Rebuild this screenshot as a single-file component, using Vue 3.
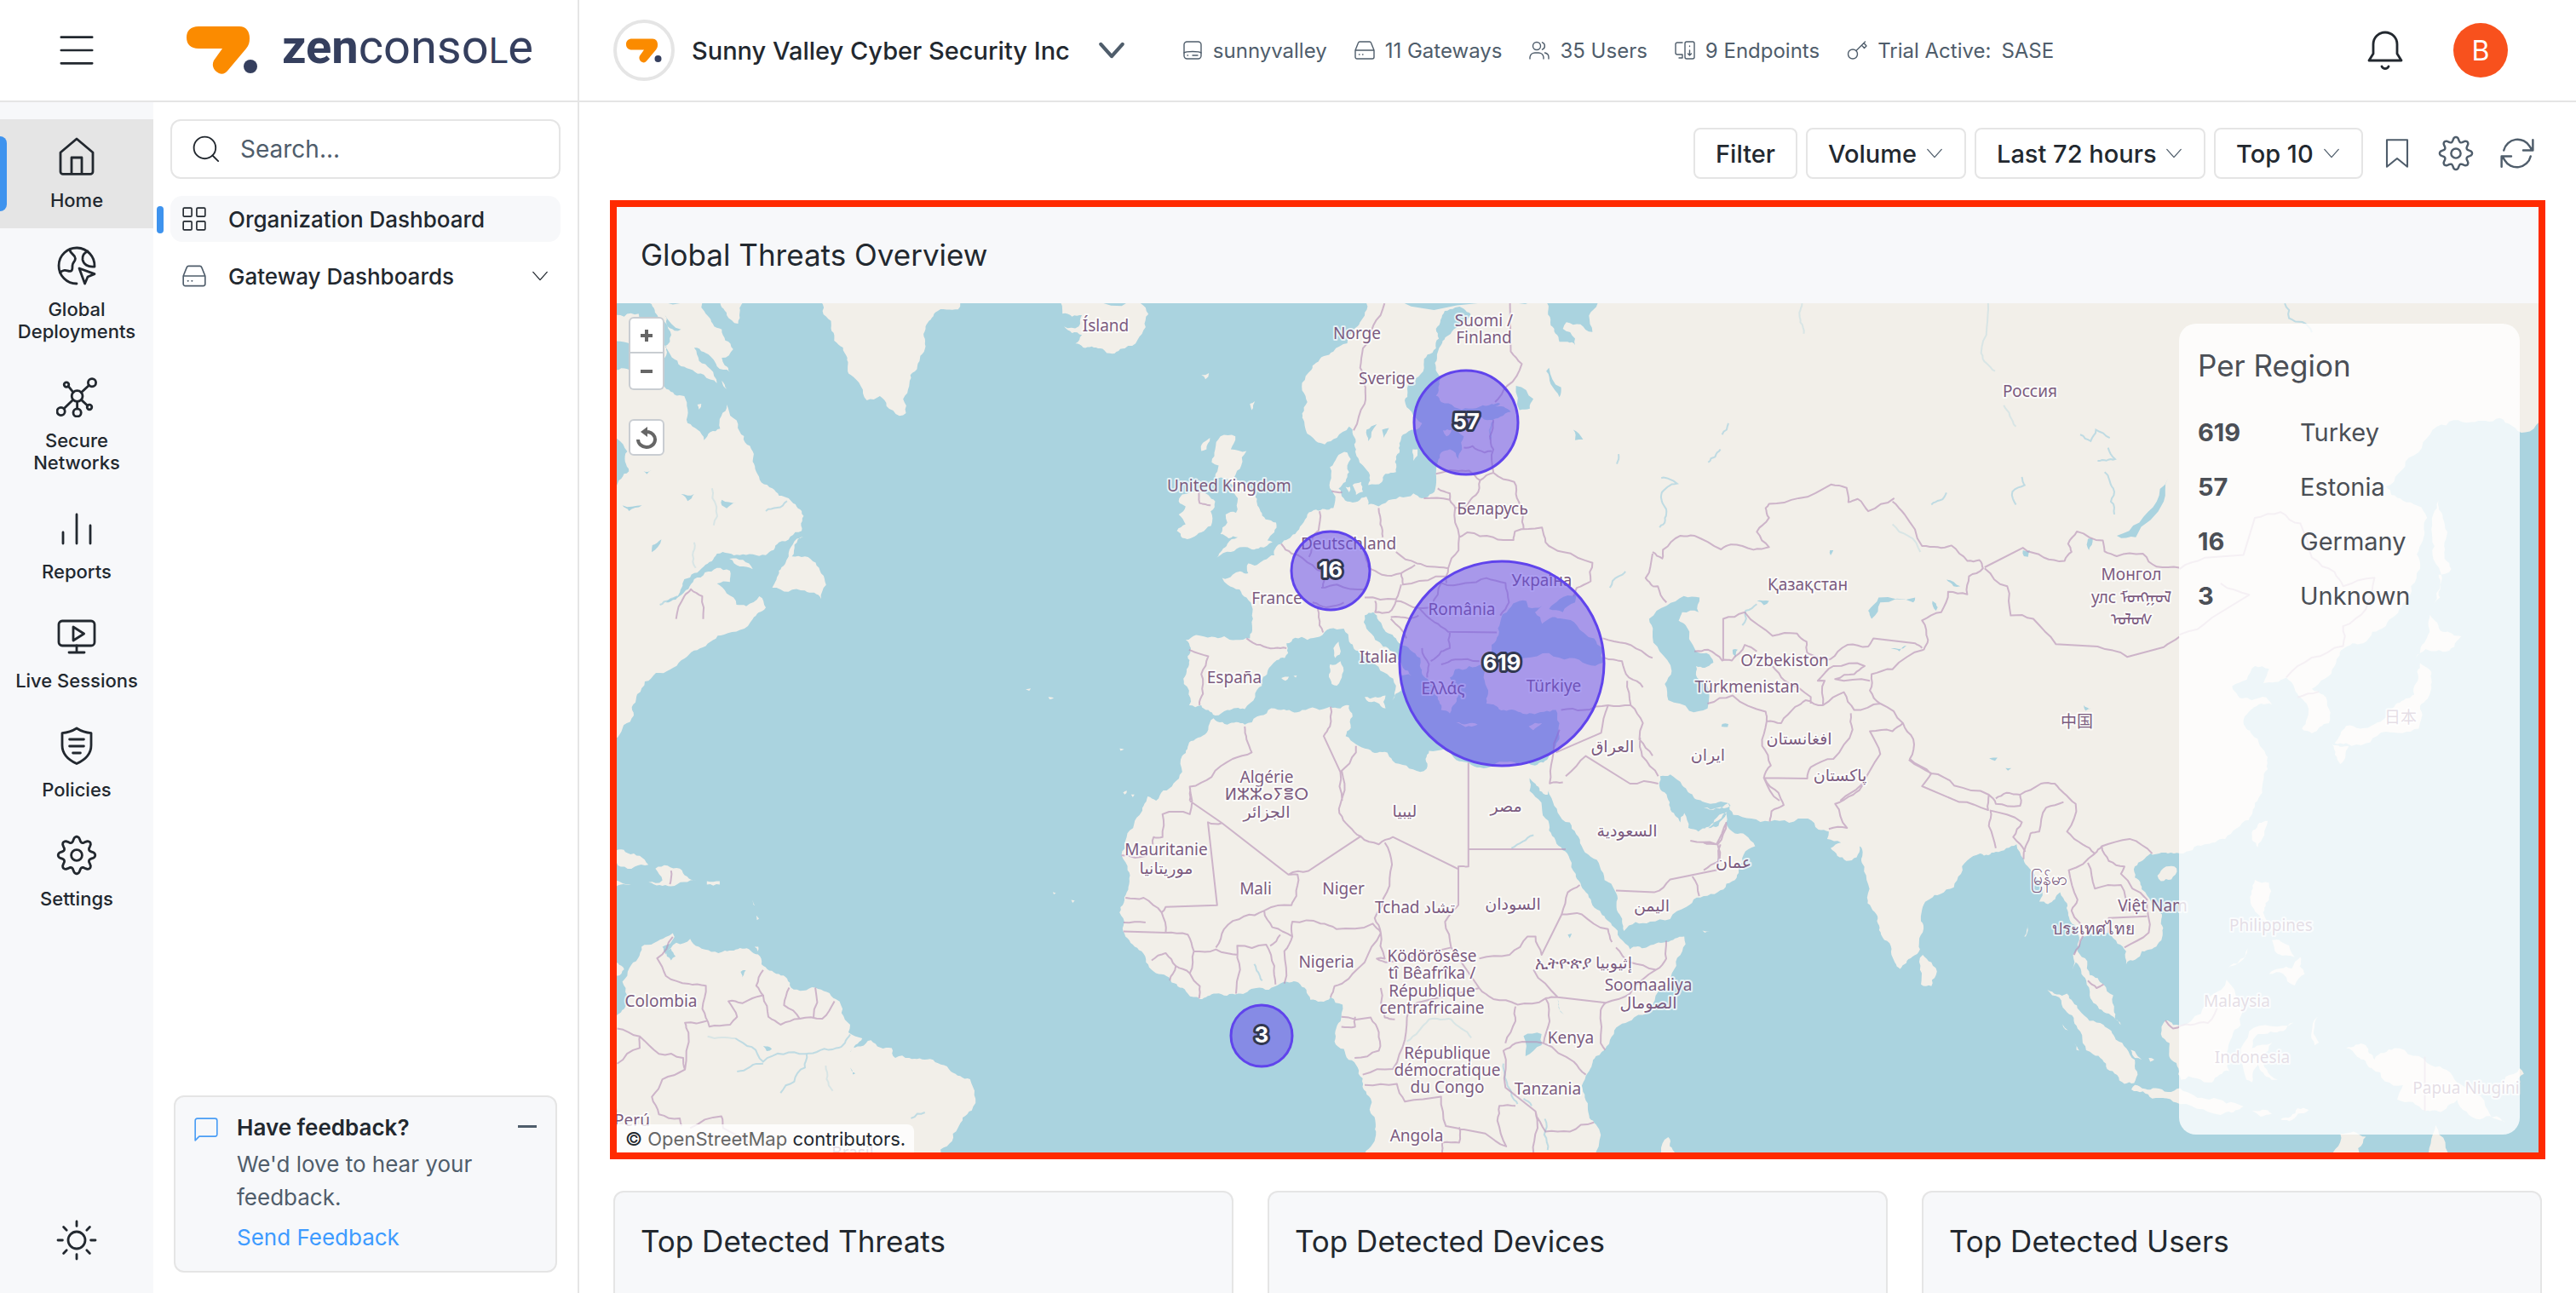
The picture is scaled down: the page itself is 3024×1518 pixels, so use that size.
<script setup>
import { ref } from 'vue'

const navItems = [
  { icon: 'home', label: 'Home', active: true },
  { icon: 'globe', label: 'Global Deployments' },
  { icon: 'network', label: 'Secure Networks' },
  { icon: 'bars', label: 'Reports' },
  { icon: 'live', label: 'Live Sessions' },
  { icon: 'shield', label: 'Policies' },
  { icon: 'gear', label: 'Settings' },
]
const facts = [
  { icon: 'disk', text: 'sunnyvalley' },
  { icon: 'drive', text: '11 Gateways' },
  { icon: 'users', text: '35 Users' },
  { icon: 'endpoints', text: '9 Endpoints' },
  { icon: 'key', text: 'Trial Active:', extra: 'SASE' },
]
const selects = [
  { label: 'Metric', value: 'Volume', width: 106 },
  { label: 'Time range', value: 'Last 72 hours', width: 189 },
  { label: 'Row count', value: 'Top 10', width: 93 },
]
const regions = [
  { count: 619, name: 'Turkey' },
  { count: 57, name: 'Estonia' },
  { count: 16, name: 'Germany' },
  { count: 3, name: 'Unknown' },
]
const cards = ['Top Detected Threats', 'Top Detected Devices', 'Top Detected Users']
const search = ref('')

/* Eight-toothed gear outline on a 24-unit grid */
const gearPath = (() => {
  const pts = []
  for (let i = 0; i < 96; i++) {
    const t = (i / 96) * Math.PI * 2
    const w = Math.cos(8 * t)
    const r = 9.4 + 1.5 * Math.sign(w) * Math.pow(Math.abs(w), 0.7)
    pts.push(`${(12 + r * Math.sin(t)).toFixed(2)} ${(12 - r * Math.cos(t)).toFixed(2)}`)
  }
  return 'M' + pts.join('L') + 'Z'
})()

/* Map sheets: origin and unit size of each local grid */
const sheets = {
  G: [0, 0, 1, 1],
  N: [700, 220, 0.38265, 0.33333],
  E: [1300, 340, 0.40816, 0.38265],
  A: [1940, 340, 0.40816, 0.38265],
  P: [2500, 340, 0.33418, 0.66964],
  S: [700, 800, 0.40816, 0.45791],
  F: [1300, 840, 0.47194, 0.4324],
  I: [2000, 840, 0.40816, 0.4324],
}
const place = (s, x, y) => {
  const [ox, oy, sx, sy] = sheets[s]
  return [ox + x * sx, oy + y * sy]
}
/* "E 1,2 3,4 F 5,6" -> points in map space */
const parse = (src) => {
  let s = 'G'
  const out = []
  for (const tok of src.trim().split(/\s+/)) {
    if (/^[A-Z]$/.test(tok)) s = tok
    else {
      const [x, y] = tok.split(',').map(Number)
      out.push(place(s, x, y))
    }
  }
  return out
}
const noise = (a, b) => {
  const v = Math.sin(a * 12.9898 + b * 78.233) * 43758.5453
  return v - Math.floor(v) - 0.5
}
/* Midpoint displacement gives coasts and borders a natural ragged edge */
const rough = (pts, closed, amount, depth, longest = 300) => {
  let list = pts
  for (let d = 0; d < depth; d++) {
    const next = []
    const n = list.length
    for (let i = 0; i < n; i++) {
      const p = list[i]
      next.push(p)
      if (!closed && i === n - 1) break
      const q = list[(i + 1) % n]
      const dx = q[0] - p[0]
      const dy = q[1] - p[1]
      const len = Math.hypot(dx, dy)
      if (len < 5 || len > longest) continue
      const k = noise(p[0] + q[0], p[1] + q[1]) * amount
      next.push([(p[0] + q[0]) / 2 - dy * k, (p[1] + q[1]) / 2 + dx * k])
    }
    list = next
  }
  return 'M' + list.map((p) => `${p[0].toFixed(1)} ${p[1].toFixed(1)}`).join('L') + (closed ? 'Z' : '')
}
const lines = (src) => src.trim().split('\n').map((l) => l.trim()).filter(Boolean)

const landPath = lines(`
E 745,42 740,80 710,120 690,165 650,190 600,225 570,265 560,310 575,345 560,380 570,430 600,465 625,475 660,455 695,420 705,430 715,490 735,540 755,570 750,600 790,590 800,565 830,560 840,500 850,445 885,430 905,410 875,375 855,340 865,290 910,230 945,180 945,120 970,65 1000,55 1045,75 1020,100 990,130 960,170 948,210 945,240 955,290 945,325 960,345 1040,365 1080,355 1130,350 1115,358 1160,375 1130,390 1100,400 1040,385 1010,395 1000,430 1025,450 1020,490 1010,520 985,490 960,500 950,530 945,565 945,600 935,625 905,640 880,625 840,635 800,655 780,665 750,660 745,635 720,650 690,650 680,640 665,610 685,590 695,560 690,540 700,520 690,500 660,515 640,545 640,590 650,625 650,670 600,675 575,690 560,720 540,750 520,765 500,780 485,790 480,815 450,830 430,845 405,840 405,870 360,875 330,885 345,905 380,920 400,945 418,980 415,1020 410,1070 370,1075 300,1065 255,1060 225,1075 240,1100 235,1150 220,1210 235,1230 235,1275 270,1275 290,1290 310,1307 345,1290 395,1287 425,1250 445,1215 440,1200 470,1155 510,1130 520,1115 515,1085 540,1068 575,1075 610,1065 640,1040 680,1040 695,1080 730,1120 770,1150 805,1180 830,1215 820,1260 845,1230 840,1190 875,1185 850,1160 820,1110 770,1075 745,1040 740,1000 765,990 775,1000 790,1030 830,1070 870,1105 900,1130 905,1180 925,1200 940,1240 960,1290 985,1300 1000,1270 1010,1240 985,1190 1000,1165 1040,1155 1080,1150 1085,1160 1085,1200 1095,1240 1090,1270 1140,1290 1170,1290 1220,1300 1290,1290 1300,1330 1300,1370 1290,1400 1270,1430 1230,1460 1180,1455 1100,1465 1030,1450 970,1410 925,1415 915,1440 918,1470 900,1480 860,1460 820,1445 805,1420 750,1410 715,1395 685,1370 700,1345 705,1310 695,1275 670,1285 640,1280 600,1285 560,1290 500,1290 430,1310 395,1335 345,1335 315,1325 305,1315 290,1350 240,1385 215,1430 215,1480 190,1515 140,1568 F 100,220 80,270 45,340 35,380 50,420 48,480 30,535 40,570 45,600 85,640 115,695 160,725 200,755 230,770 270,755 325,755 370,740 430,728 475,725 495,745 505,772 555,765 585,785 580,830 565,885 600,935 635,985 655,1040 655,1080 668,1130 640,1190 640,1230 1215,1230 1215,1110 1195,1070 1180,1005 1195,970 1215,925 1260,865 1310,820 1370,750 1415,680 1430,640 1435,600 1390,615 1340,630 1300,635 1275,605 1255,570 1225,530 1190,480 1165,430 1150,390 1115,340 1090,280 1050,205 1050,170 1075,205 1095,215 1100,200 1105,225 1150,290 1180,355 1225,410 1262,475 1270,535 1285,585 1350,560 1440,520 1500,485 I 0,487 40,480 95,440 100,415 148,355 120,325 90,320 65,290 65,262 30,290 0,310 F 1540,265 1520,300 1470,315 1445,305 1435,265 1425,290 1400,250 1375,200 1375,165 1400,160 1430,190 1460,225 1500,240 1550,245 I 0,250 70,238 85,270 190,288 300,280 330,310 360,315 355,335 395,345 365,360 410,395 440,385 448,355 455,400 470,495 500,545 510,595 540,650 565,688 600,655 622,635 620,605 632,570 630,520 680,485 740,430 795,375 840,370 900,350 920,390 955,440 975,470 965,505 990,512 1025,480 1045,510 1055,560 1080,610 1062,650 1060,690 1070,670 1100,720 1110,760 1150,805 1200,840 1180,800 1178,760 1150,730 1110,705 1075,640 1090,600 1120,585 1165,590 1190,620 1215,640 1215,675 1260,640 1310,615 1320,590 1318,540 1270,480 1240,440 1240,410 1285,375 1335,375 1370,375 1440,350 1500,335 P 419,930 440,900 470,860 485,820 430,780 400,755 430,735 500,728 480,715 430,720 370,705 360,695 440,660 490,665 470,690 550,680 580,700 600,715 625,730 605,770 640,778 700,760 700,735 680,710 640,700 720,660 750,630 820,620 900,590 960,550 1020,490 1030,440 1045,400 960,370 920,360 900,345 980,295 1080,240 1200,232 1300,225 1390,250 1500,230 1500,0 E 1410,20 1410,42 1385,80 1395,130 1320,100 1310,120 1345,150 1345,170 1300,160 1275,110 1265,42 1265,20 745,20
N 1425,390 1430,445 1490,450 1480,490 1435,490 1490,520 1470,550 1520,560 1568,585 E 0,195 50,180 110,115 118,75 95,42 95,20
E 325,450 368,450 355,490 400,495 385,540 365,575 400,600 425,630 440,680 455,705 485,715 480,745 460,770 475,775 440,790 390,790 355,805 315,822 345,780 375,760 325,750 345,715 340,690 370,685 375,640 350,620 365,600 345,580 310,575 320,540 300,530 310,490
E 205,650 250,620 290,630 310,650 297,680 298,725 270,745 215,762 200,740 225,720 205,690 225,665
E 275,470 295,455 285,490 270,495
E 705,600 730,590 735,620 715,630
E 685,605 698,605 695,622
E 878,490 892,490 880,525
E 270,262 292,256 282,275
E 410,350 424,342 415,370
E 990,430 965,432 975,450
E 640,1150 670,1140 675,1180 660,1215 645,1210
E 665,1080 668,1120 655,1130 650,1100
E 740,1250 800,1245 800,1285 745,1260
E 1003,1328 1065,1335 1030,1342
E 1212,1340 1250,1330 1225,1352
E 500,1192 522,1188 512,1200
E 535,1185 545,1184 542,1190
N 690,390 720,470 730,540 770,600 780,660 830,750 870,735 890,770 930,805 950,795 960,700 985,630 1010,560 1010,490 1040,440 1110,430 1130,390
N 150,390 180,440 230,520 210,560 260,630 330,660 370,690 350,640 300,565 330,580 370,630 410,650 385,600 420,570 385,500 340,450 320,390
N 380,390 400,450 435,480 440,440 465,390
N 40,460 130,445 160,500 215,560 210,600 130,560 40,530
N 385,680 400,710 390,700
N 310,765 322,762 315,782
N 40,645 110,655 130,700 215,710 270,735 280,830 330,890 380,850 400,765 440,860 480,930 490,1000 540,1060 590,1095 630,1140 630,1210 560,1250 520,1295 440,1295 370,1290 330,1335 270,1380 250,1440 200,1470 255,1440 300,1380 370,1340 410,1350 410,1390 370,1395 400,1430 430,1470 460,1475 500,1440 520,1480 480,1520 G 850,745 825,760 800,775 770,790 757,800 748,815 744,840 725,866 700,870 N 20,1060 63,1060 100,1000 95,930 63,885 20,860
N 635,1230 600,1300 640,1300 690,1360 705,1400 690,1450 640,1420 540,1410 560,1350 590,1300
N 408,1308 450,1312 480,1345 440,1335
S 40,425 90,440 150,470 70,475
S 40,510 100,520 40,525
S 170,480 240,480 290,510 215,525 150,515 190,510
S 318,512 355,512 355,521 318,521
S 40,1240 40,880 60,855 80,840 75,770 95,735 120,710 130,680 200,655 220,645 225,655 190,680 200,700 230,670 270,660 295,680 370,690 420,685 465,700 475,725 525,750 560,785 630,785 690,815 705,850 730,880 725,900 765,915 730,950 790,920 850,940 860,965 900,965 960,968 1020,1000 1075,1020 1087,1060 1080,1100 1040,1145 990,1200 985,1240
S 40,710 80,738 60,755
S 450,560 456,575 452,572
S 460,600 468,608 462,612
S 455,680 466,680 464,692
S 1235,20 1250,18 1245,24
S 1300,40 1316,42 1304,46
S 1505,172 1518,174 1508,178
S 1515,285 1526,280 1520,290
S 1538,290 1548,290 1543,297
S 1313,540 1322,543 1316,546
S 1366,560 1376,562 1370,568
F 1385,1230 1395,1145 1412,1190 1412,1230
F 1480,584 1498,586 1486,590
I 630,650 655,670 668,705 655,735 625,730 622,690
I 988,745 1045,755 1080,800 1150,840 1185,880 1240,935 1238,998 1210,1000 1160,960 1120,920 1075,850 1040,800
I 1032,838 1048,855 1040,852
I 1066,890 1080,910 1072,908
I 932,565 926,600 922,600
I 1228,908 1240,912 1260,935 1240,930
I 1280,930 1296,934 1284,940
I 1230,1015 1240,1003 1300,1012 P 177,1400 280,1420 400,1432 340,1442 I 1370,1055 1290,1040
P 430,1440 500,1445 460,1450
P 530,1455 590,1435 630,1438 560,1458
P 175,1290 250,1270 340,1210 390,1290 360,1310 350,1370 290,1390 180,1385 I 1345,935 1340,890 1315,865 1328,828 1350,840
P 420,1300 575,1285 540,1300 450,1305 430,1330 500,1320 460,1345 520,1385 480,1380 450,1350 430,1390 410,1385
P 640,1300 660,1275 665,1320 650,1325
P 440,1035 490,1040 490,1070 475,1100 510,1120 440,1090 425,1075
P 490,1200 530,1190 570,1190 600,1170 615,1200 580,1220 540,1200
P 500,1140 560,1150 580,1170 520,1165
P 345,1190 415,1155 380,1180
P 430,965 455,935 485,932 450,978
I 1305,435 1330,410 1360,415 1345,445 1315,450
P 1055,570 1100,600 1165,608 1100,635 1040,630 1005,645 1045,610
P 1020,655 1060,670 1060,700 1020,730 1015,770 900,775 780,800 760,795 720,795 760,765 860,762 900,750 940,725 1000,710 1010,670
P 710,797 770,800 740,832
P 1085,370 1100,400 1105,450 1130,490 1085,500 1090,540 1070,550 1075,480 1060,420
P 760,1330 830,1325 860,1350 930,1330 1060,1360 1150,1390 1260,1440 1320,1460 1230,1455 1150,1420 1100,1440 1040,1440 940,1420 960,1395 850,1365 800,1345
P 1280,1400 1370,1365 1385,1375 1320,1405
P 690,1530 740,1480 830,1485 800,1530
P 1045,1530 1075,1465 1110,1530
`).map((l) => rough(parse(l), true, 0.34, 3)).join('')

const waterPath = lines(`
E 1185,955 1205,955 1210,975 1250,970 1230,990 1250,1025 1280,1005 1310,1010 1350,1030 1400,1070 1425,1100 1425,1145 1380,1150 1330,1130 1270,1115 1200,1130 1150,1120 1115,1130 1105,1090 1125,1060 1130,1020 1155,980
E 1270,980 1300,950 1350,935 1345,960 1310,990
A 90,940 135,945 132,990 85,990 75,1015 95,1030 125,1110 155,1115 175,1145 150,1160 125,1155 128,1190 155,1210 158,1285 105,1292 45,1260 35,1210 55,1170 20,1110 0,1050 -10,1010 40,970
E 1175,295 1225,335 1215,365 1185,370
E 1270,240 1305,300 1300,330 1275,290 1262,250
E 1340,430 1368,460 1345,462
E 745,430 775,413 750,465
E 790,430 810,425 795,455
F 1035,870 1080,865 1080,895 1040,925
A 1482,580 1470,650 1390,760 1335,755 1400,715 1450,650
A 620,985 650,945 755,945 750,960 655,960 630,1010
A 805,955 820,975 815,985
A 685,1100 730,1092 710,1110
A 845,890 885,910 865,910
A 1065,800 1085,800 1080,820 1068,818
A 1252,765 1266,765 1255,800
A 230,1105 245,1105 238,1130
A 1240,1275 1262,1285 1245,1292
A 200,1333 218,1333 216,1342 198,1341
A 300,955 335,955 320,968
A 510,800 520,800 512,815
A 968,1438 992,1436 985,1446
A 1015,1468 1032,1468 1022,1476
S 200,690 215,685 228,705 215,715 203,705
S 415,745 430,740 420,765
S 730,990 745,1005 738,1008
S 480,935 505,942 490,948
N 385,1100 430,1110 400,1130 385,1120
N 260,1080 300,1080 280,1105
N 200,1240 170,1285 172,1260
N 80,1120 140,1120 100,1140
N 145,1000 170,995 155,1010
N 210,450 260,500 240,505 215,480
F 1145,595 1155,592 1150,605
F 1120,770 1135,812 1125,800
`).map((l) => rough(parse(l), true, 0.3, 2)).join('')

const riverPath = lines(`
F 985,945 995,1005 1020,1055
F 1088,1095 1095,1180
F 1005,360 1060,325
F 365,675 385,720
F 1035,1040 1055,1060
E 1110,405 1100,460
E 1470,505 1465,535
E 1445,915 1470,880 1490,865
A 20,730 40,680 25,630 70,595 25,578
A 160,530 195,490
A 200,445 218,410
A 802,660 845,623
A 1045,660 1035,620 1070,600 1062,575
A 1230,445 1260,465 1275,430 1315,455
A 1310,485 1330,520 1280,525
A 1300,560 1325,610 1328,690
A 258,1030 268,985 300,965
P 545,24 560,50 640,75
S 400,915 480,975 600,955 690,940 730,905
S 405,1000 480,980
S 530,1055 600,990 605,955
S 905,1120 945,1105
N 520,1140 585,1105
N 195,1470 250,1440
`).map((l) => rough(parse(l), false, 0.3, 3)).join('')

/* Streams that are barely visible at this zoom level */
const streamPath = lines(`
A 965,42 945,195 985,250
A 430,42 425,100 435,135
A 1010,355 1045,420
A 690,720 770,805
S 320,910 400,915
S 660,985 680,1050
N 355,1060 360,1190
N 300,1250 305,1340
F 745,885 800,825 855,825 905,875
`).map((l) => rough(parse(l), false, 0.25, 3)).join('')

const borderPath = lines(`
E 797,42 765,110 735,180 727,240 742,300 740,350 708,432
E 1158,42 1160,190 1192,228 1150,295 1115,345
E 1110,400 1100,450 1110,490 1110,560
E 1025,485 1050,480 1085,500 1105,495
E 945,565 1000,555 1040,555 1072,585 1110,562 1170,590 1178,640 1195,690 1197,735
E 950,610 985,625 985,645 910,640
E 1072,585 1060,630 1030,665 1000,670 1000,715 1010,800 980,855
E 985,645 1000,670
E 1010,760 1035,745 1110,760 1168,768 1172,742 1250,730 1260,775 1310,805 1395,838 1390,895 1350,915 1340,940
E 780,670 785,720 792,760
E 830,805 890,840 930,850 980,855
E 740,810 750,850 790,875 845,870 885,845
E 845,870 850,905 945,880 975,880
E 610,680 607,740 590,760 580,820
E 500,780 530,810 590,845 625,870 620,915
E 615,915 660,905 740,920 755,890
E 590,960 630,975 680,960
E 605,980 610,1030 620,1052
E 740,945 830,950 845,905
E 770,955 770,990 810,990 830,955 880,975 935,970 960,900 1030,900 1090,885 1145,900 1155,960 1130,1000
E 980,855 975,900
E 815,1005 870,1010 895,1000
E 815,1010 860,1070
E 895,975 940,1020 980,1050 1120,1052
E 985,1050 985,1100 960,1110 930,1140
E 905,1100 925,1150 920,1190
E 960,1150 1000,1135 1070,1140
E 400,1070 440,1090 480,1100 515,1100
E 235,1105 290,1125 270,1180 275,1240 265,1275
E 265,615 265,655 297,662
E 645,618 675,622
E 1425,1070 1490,1085 1550,1120 1568,1130
E 1430,1130 1480,1140 1500,1190 1540,1220
E 1305,1290 1370,1290 1440,1275 1505,1275 1495,1200
E 1440,1275 1420,1360 1290,1420
E 1505,1275 1540,1330 1530,1380 1568,1430
E 1568,810 1548,885 1568,910
E 1300,1350 1280,1440 1272,1515 1310,1512
E 642,1280 640,1340 622,1370 670,1480
E 715,1400 715,1420 670,1480 675,1568
E 395,1340 400,1380 415,1420 360,1440 300,1495 237,1525 237,1568
F 205,195 205,268 137,268 137,330 115,330 113,350
F 205,232 285,292 450,432 500,422 630,328 675,350 710,330 873,417
F 583,150 585,220 577,265 600,300 630,328
F 285,292 250,290 273,515 145,520 135,535
F 35,380 100,380
F 45,495 90,495 135,535 145,590
F 40,562 95,562
F 40,586 145,590
F 450,432 473,432 470,490 458,515 390,530 340,545 290,580 270,630
F 690,345 708,405 695,480 665,550 680,590
F 898,128 898,410 873,410 873,515 840,560 855,630
F 898,363 1140,363
F 460,600 460,560 530,565 570,580 660,565 680,590 640,670 600,715 565,735 555,765
F 390,530 410,575 460,600 440,640 440,728
F 320,755 330,690 323,625 395,622 415,680 418,730
F 405,625 430,595
F 215,640 270,635 325,650
F 145,590 200,595 215,640 205,700 230,735 228,768
F 110,665 145,645 170,680 155,720
F 170,680 205,700
F 680,590 690,660 670,660 700,670 855,630
F 925,660 1000,650 1045,600 1065,600 1080,650 1130,540 1145,480 1175,460
F 1130,540 1180,540 1245,580 1255,615
F 1265,630 1300,670 1365,690 1300,755 1240,780 1120,765 1060,690
F 1390,612 1390,660 1365,690
F 1240,780 1227,800 1227,890 1238,908
F 855,630 925,740 960,770 1020,785 1090,768 1120,765
F 1090,768 1100,830 1085,890 1015,890 985,910 990,1010 1065,1075 1090,1130 1150,1130 1210,1105
F 1085,890 1160,940 1190,975
F 1015,790 1015,830 990,890
F 640,1003 720,1000 740,1048 830,1035 842,1115 940,1135 992,1170 970,1100 975,1060 1015,1060
F 833,1190 833,1160 875,1160 875,1118
F 1065,1075 1070,1120 1060,1190
F 680,740 690,820 715,825
F 925,740 770,780 750,800 740,880 710,960 635,975
F 582,818 655,820 675,860 675,910 615,930
F 582,845 616,845 616,818
F 1140,165 1190,110 1300,185 1370,185
F 1450,340 1515,350 1540,290
F 1265,475 1360,480 1400,445 1515,420 1525,350
F 1455,437 1472,490
F 1325,60 1330,110 1370,165
A 0,805 28,825 30,798 80,755 120,755 197,797 225,782 290,798 335,790 300,743 335,700 325,670 335,657 420,640 513,598 558,608 563,652 590,642 620,680 695,640
A 690,650 725,690 775,787 820,790 860,785 905,832 940,830 950,855 910,880 905,935 850,927 830,990 775,1015 792,1075 780,1105
A 775,1100 755,1085 635,1070 620,1095 560,1090 510,1135
A 955,852 1065,792 1125,822 1185,832 1205,805 1195,780 1220,742 1295,770 1300,803 1335,818 1410,810 1450,850 1515,853
A 955,855 1020,910 1030,1000 1095,1010 1160,1088 1280,1095 1365,1127 1470,1097 1515,1065
A 203,1138 203,1010 265,990 345,1062 415,1055 443,1080 445,1115 510,1135
A 120,1110 160,1105 200,1138 228,1138 265,1090 300,1110
A 780,1105 690,1165 630,1180 625,1230 655,1270 720,1330 750,1380 740,1440 800,1485
A 345,1155 380,1200 455,1250 455,1270
A 158,1270 230,1245 325,1295 328,1325 370,1330 410,1280 440,1260 490,1275 550,1235 580,1290 655,1270
A 328,1325 315,1400 340,1460 320,1498 365,1568
A 320,1498 445,1500 455,1465 520,1440 575,1350 570,1300
A 720,1330 690,1355 625,1355 655,1425 600,1520 540,1568
A 490,1275 495,1200 475,1200 520,1155 610,1155 580,1180 525,1195 625,1200
A 0,910 15,910 40,960
I 190,288 195,260 230,243 215,210 175,170
I 460,185 430,215 378,240 412,305 360,308
I 590,120 655,157 720,190 820,215 818,257 735,235 628,192 655,157
I 820,215 840,240 910,245 910,215 870,210 840,225
I 910,215 970,185 1010,185 1035,210 1070,240 1045,315 1090,350 1125,375 1145,355 1225,335 1290,375
I 1035,235 985,250 965,315 940,320 920,390
I 840,360 820,300 825,258 915,290 890,330 925,370
I 1125,375 1050,420 1075,500 1058,530 1090,600 1065,650
I 1145,355 1165,395 1210,410 1200,430 1275,500 1280,590 1210,630
I 1105,400 1125,470 1200,460 1215,530
I 1165,590 1165,550 1275,545
I 0,345 40,350 65,290
I 40,350 45,395 0,420
I 1105,720 1130,740 1150,730
I 1328,828 1350,850 1400,840 1450,835 1480,780
P 175,490 265,470 400,465 440,400 530,390 600,410 640,470 720,495 750,520 860,505 830,560 750,590 750,625 640,645 550,680
P 590,715 665,705
P 1037,1345 1037,1440
P 175,605 290,575 420,535 320,515
S 220,655 175,710 200,755 265,775 315,780 305,840 325,885 385,880 405,860 380,820 420,825 480,805 460,780 480,740
S 480,805 495,860 530,880 585,865 540,830 555,785
S 585,865 650,865 685,820
S 630,785 625,860
S 60,890 125,910 180,955 250,965 255,995 190,1020 160,1065 180,1110 240,1120 245,1140
S 320,870 255,875 265,900 255,995
S 60,980 125,940 125,910
S 215,485 212,520
S 270,1145 360,1115 365,1145 470,1195
N 245,1520 270,1440 290,1415 325,1440 328,1520
`).map((l) => rough(parse(l), false, 0.2, 2, 44)).join('')

const labels = [
  ['G', 1298, 382, 'Ísland'],
  ['E', 717, 132, 'Norge'], ['E', 803, 271, 'Sverige'], ['E', 1083, 93, 'Suomi /'], ['E', 1083, 146, 'Finland'],
  ['E', 350, 600, 'United Kingdom'], ['E', 1108, 672, 'Беларусь'], ['E', 694, 778, 'Deutschland'],
  ['E', 487, 945, 'France'], ['E', 1250, 892, 'Україна'], ['E', 1020, 979, 'România'], ['E', 780, 1127, 'Italia'],
  ['E', 365, 1188, 'España'], ['E', 965, 1224, 'Ελλάς'], ['E', 1285, 1216, 'Türkiye'], ['E', 1452, 1400, 'العراق'],
  ['E', 458, 1496, 'Algérie'], ['E', 458, 1548, 'ⵍⵣⵣⴰⵢⴻⵔ'], ['F', 396, 262, 'الجزائر'],
  ['A', 1086, 311, 'Россия'], ['A', 447, 905, 'Қазақстан'], ['A', 380, 1138, 'Oʻzbekiston'],
  ['A', 272, 1218, 'Türkmenistan'], ['A', 422, 1378, 'افغانستان'], ['A', 160, 1426, 'ایران'],
  ['A', 538, 1490, 'پاکستان'], ['A', 1376, 873, 'Монгол'], ['A', 1376, 943, 'улс ᠮᠣᠩᠭᠣᠯ'], ['A', 1376, 1012, 'ᠤᠯᠤᠰ'],
  ['A', 1220, 1324, '中国'],
  ['F', 147, 364, 'Mauritanie'], ['F', 147, 414, 'موريتانيا'], ['F', 369, 470, 'Mali'], ['F', 587, 470, 'Niger'],
  ['F', 739, 258, 'ليبيا'], ['F', 991, 246, 'مصر'], ['F', 1292, 313, 'السعودية'], ['F', 765, 521, 'Tchad تشاد'],
  ['F', 1008, 510, 'السودان'], ['F', 1353, 516, 'اليمن'], ['I', 85, 398, 'عمان'], ['F', 544, 669, 'Nigeria'],
  ['F', 807, 652, 'Ködörösêse'], ['F', 807, 698, 'tî Bêafrîka /'], ['F', 807, 746, 'République'],
  ['F', 807, 793, 'centrafricaine'], ['F', 1185, 670, 'ኢትዮጵያ إثيوبيا'], ['F', 1346, 731, 'Soomaaliya'],
  ['F', 1346, 780, 'الصومال'], ['F', 1153, 875, 'Kenya'], ['F', 845, 915, 'République'],
  ['F', 845, 962, 'démocratique'], ['F', 845, 1009, 'du Congo'], ['F', 1096, 1013, 'Tanzania'],
  ['F', 769, 1140, 'Angola'], ['I', 992, 443, 'မြန်မာ'], ['I', 1120, 578, 'ประเทศไทย'], ['I', 1292, 515, 'Việt Nam'],
  ['P', 952, 750, '日本'], ['P', 497, 1114, 'Philippines'], ['P', 377, 1247, 'Malaysia'],
  ['P', 432, 1345, 'Indonesia'], ['P', 1183, 1399, 'Papua Niugini'], ['S', 186, 820, 'Colombia'],
  ['S', 103, 1125, 'Perú'], ['S', 738, 1208, 'Brasil'],
].map(([s, x, y, text]) => {
  const [px, py] = place(s, x, y)
  return { x: Math.round(px), y: Math.round(py) + 7, text }
})

const markers = [
  { x: 1721, y: 496, r: 61, n: 57 },
  { x: 1562, y: 670, r: 46, n: 16 },
  { x: 1763, y: 779, r: 120, n: 619 },
  { x: 1481, y: 1216, r: 36, n: 3 },
]
</script>

<template>
  <div class="app">
    <svg class="sprite" aria-hidden="true">
      <symbol id="i-menu" viewBox="0 0 24 24"><path d="M2.5 4h19M2.5 12h19M2.5 20h19" /></symbol>
      <symbol id="i-home" viewBox="0 0 24 24"><path d="M2.5 9.5 12 1.5l9.500 8v11.200a1.500 1.500 0 0 1-1.500 1.500H4a1.500 1.500 0 0 1-1.500-1.500zM9 22V12.500h6V22" /></symbol>
      <symbol id="i-globe" viewBox="0 0 24 24"><path d="M12 22.500A10.500 10.500 0 1 1 22.500 12.500C18.500 13 16 11 15.500 8.500c-.3-2.500 1-4.200 3-5M8 2.500c0 2.500 3.200 2.800 3.200 5.200 0 2-1.700 2.300-1.700 4.300 0 1.500.2 3-1.200 3.200-1.500.2-2-.8-3.600-.5-1.500.2-2 .8-2.500 1.500M13.500 13.500l9 3.300-4 1.700-1.700 4z" /></symbol>
      <symbol id="i-network" viewBox="0 0 24 24"><circle cx="12.300" cy="11.500" r="3.200" /><circle cx="21" cy="3.600" r="2.300" /><circle cx="6" cy="4.800" r="1.400" /><circle cx="2.800" cy="20.500" r="2.300" /><circle cx="12.300" cy="21.200" r="2.300" /><circle cx="19.500" cy="18" r="1.400" /><path d="m14.700 9.400 4.600-4.300M7.100 5.700l2.900 3.600M9.800 13.700l-5.300 5.200M12.300 14.700v4.200M14.700 13.700l3.700 3.400" /></symbol>
      <symbol id="i-bars" viewBox="0 0 24 24"><path d="M4 14.500V21M12 4v17M20 10.500V21" /></symbol>
      <symbol id="i-live" viewBox="0 0 24 24"><rect x="1.500" y="2.500" width="21" height="14.500" rx="2" /><path d="M12 17v4M7.500 21h9M10 6v8l6.300-4z" /></symbol>
      <symbol id="i-shield" viewBox="0 0 24 24"><path d="M12 1.500c2.500 1.600 5.300 2.600 8.500 2.800v7.200c0 5-3.500 8.500-8.500 10.800-5-2.300-8.500-5.800-8.500-10.800V4.300C6.700 4.100 9.500 3.100 12 1.500zM7.800 8h8.400M7.800 12h8.400M9.800 16h4.400" /></symbol>
      <symbol id="i-gear" viewBox="0 0 24 24"><path :d="gearPath" /><circle cx="12" cy="12" r="3.200" /></symbol>
      <symbol id="i-sun" viewBox="0 0 24 24"><circle cx="12" cy="12" r="5" /><path d="M12 1v2.700M12 20.300V23M1 12h2.700M20.300 12H23M4.300 4.300l1.800 1.800M17.900 17.900l1.800 1.800M19.700 4.300l-1.800 1.800M6.100 17.900l-1.800 1.800" /></symbol>
      <symbol id="i-search" viewBox="0 0 24 24"><circle cx="10.800" cy="10.800" r="9.600" /><path d="m17.600 17.600 5 5" /></symbol>
      <symbol id="i-grid" viewBox="0 0 24 24"><rect x="1" y="1" width="8.500" height="8.500" rx="1" /><rect x="14.500" y="1" width="8.500" height="8.500" rx="1" /><rect x="1" y="14.500" width="8.500" height="8.500" rx="1" /><rect x="14.500" y="14.500" width="8.500" height="8.500" rx="1" /></symbol>
      <symbol id="i-drive" viewBox="0 0 24 24"><path d="M1 12 4.500 3.300A2 2 0 0 1 6.300 2h11.400a2 2 0 0 1 1.800 1.300L23 12v8a2 2 0 0 1-2 2H3a2 2 0 0 1-2-2zM1 12h22M5.500 17h.5M9.500 17h.5" /></symbol>
      <symbol id="i-disk" viewBox="0 0 24 24"><rect x="2" y="2" width="20" height="20" rx="3.500" /><path d="M2 15c2-2 18-2 20 0M6 18h.5M12 18h6" /></symbol>
      <symbol id="i-users" viewBox="0 0 24 24"><circle cx="9" cy="7" r="4.500" /><path d="M1 22v-2a6 6 0 0 1 6-5h4a6 6 0 0 1 6 5v2M15.500 2.800a4.500 4.500 0 0 1 0 8.400M18.500 15c3 .8 4.500 2.500 4.500 5v2" /></symbol>
      <symbol id="i-endpoints" viewBox="0 0 24 24"><path d="M9 3H3a2 2 0 0 0-2 2v10a2 2 0 0 0 2 2h6M9 17v4M5 21h4" /><rect x="12" y="2" width="11" height="20" rx="2" /><path d="M17.500 7v.5M17.500 12v6M15.500 16l2 2 2-2" /></symbol>
      <symbol id="i-key" viewBox="0 0 24 24"><circle cx="7" cy="16.500" r="5.500" /><path d="M11 12.500 21.500 2M17.500 6l3 3.500L23 7l-3-3.500" /></symbol>
      <symbol id="i-bell" viewBox="0 0 24 24"><path d="M12 1.500a7 7 0 0 0-7 7v5.500L2.500 18h19L19 14V8.500a7 7 0 0 0-7-7zM10 21.500a2.200 2.200 0 0 0 4 0" /></symbol>
      <symbol id="i-bookmark" viewBox="0 0 24 24"><path d="M4 1.500h16v21l-8-6.500-8 6.500z" /></symbol>
      <symbol id="i-refresh" viewBox="0 0 24 24"><path d="M3 10a9.500 9.500 0 0 1 17.500-2.500l1.500 2.500M22.500 3v7h-6.500M21 14a9.500 9.500 0 0 1-17.500 2.500L2 14M1.500 21v-7H8" /></symbol>
      <symbol id="i-chat" viewBox="0 0 24 24"><path d="M1 23V3a2 2 0 0 1 2-2h18a2 2 0 0 1 2 2v14a2 2 0 0 1-2 2H5z" /></symbol>
      <symbol id="i-chev" viewBox="0 0 24 24"><path d="m3 7 9 10 9-10" /></symbol>
      <symbol id="i-mark" viewBox="0 0 84 58">
        <path fill="#fb8b00" stroke="none" d="M14 1h48c8 0 12 6 12 14 0 5-1 8-4 12L49 52c-3 4-7 6-11 4-6-3-9-9-6-15l10-14H14C5 27 0 22 0 14S5 1 14 1z" />
        <circle cx="75" cy="48" r="8" fill="#353f5e" stroke="none" />
      </symbol>
    </svg>

    <header class="topbar">
      <div class="brand">
        <button class="bare menu" aria-label="Menu"><svg class="ic s46"><use href="#i-menu" /></svg></button>
        <a href="#" class="logo" aria-label="zenconsole">
          <svg class="mark"><use href="#i-mark" /></svg>
          <span class="word"><b>zen</b>conso<span class="cap">L</span>e</span>
        </a>
      </div>
      <div class="org">
        <span class="org-logo"><svg><use href="#i-mark" /></svg></span>
        <button class="bare org-name">Sunny Valley Cyber Security Inc<svg class="ic s32"><use href="#i-chev" /></svg></button>
        <ul class="facts">
          <li v-for="f in facts" :key="f.text">
            <svg class="ic s24"><use :href="'#i-' + f.icon" /></svg>
            <span>{{ f.text }}</span><span v-if="f.extra">{{ f.extra }}</span>
          </li>
        </ul>
        <div class="account">
          <button class="bare" aria-label="Notifications"><svg class="ic s48"><use href="#i-bell" /></svg></button>
          <button class="avatar">B</button>
        </div>
      </div>
    </header>

    <div class="body">
      <nav class="rail">
        <a v-for="n in navItems" :key="n.label" href="#" :class="{ active: n.active }">
          <svg class="ic s48"><use :href="'#i-' + n.icon" /></svg>
          <span>{{ n.label }}</span>
        </a>
        <button class="bare theme" aria-label="Theme"><svg class="ic s48"><use href="#i-sun" /></svg></button>
      </nav>

      <aside class="side">
        <label class="search">
          <svg class="ic s30"><use href="#i-search" /></svg>
          <input v-model="search" type="text" placeholder="Search..." aria-label="Search" />
        </label>
        <a href="#" class="row current"><svg class="ic s28"><use href="#i-grid" /></svg><span>Organization Dashboard</span></a>
        <a href="#" class="row"><svg class="ic s28 soft"><use href="#i-drive" /></svg><span>Gateway Dashboards</span><svg class="ic s22"><use href="#i-chev" /></svg></a>
        <section class="feedback">
          <svg class="ic s28 blue"><use href="#i-chat" /></svg>
          <div>
            <h2>Have feedback?</h2>
            <p>We'd love to hear your feedback.</p>
            <a href="#">Send Feedback</a>
          </div>
          <button class="bare minus" aria-label="Minimize"></button>
        </section>
      </aside>

      <main>
        <div class="tools">
          <button class="box">Filter</button>
          <label v-for="s in selects" :key="s.value" class="box">
            <select :aria-label="s.label" :style="{ width: s.width + 'px' }"><option>{{ s.value }}</option></select>
            <svg class="ic s22 soft"><use href="#i-chev" /></svg>
          </label>
          <div class="tool-icons">
            <button class="bare" aria-label="Bookmark"><svg class="ic s36 soft"><use href="#i-bookmark" /></svg></button>
            <button class="bare" aria-label="Settings"><svg class="ic s42 soft"><use href="#i-gear" /></svg></button>
            <button class="bare" aria-label="Refresh"><svg class="ic s42 soft"><use href="#i-refresh" /></svg></button>
          </div>
        </div>

        <section class="threats">
          <h1>Global Threats Overview</h1>
          <div class="map">
            <svg class="world" viewBox="724 356 2256 997" preserveAspectRatio="xMidYMid slice">
              <path class="land" :d="landPath" />
              <path class="water" :d="waterPath" />
              <path class="river" :d="riverPath" />
              <path class="river faint" :d="streamPath" />
              <path class="border" :d="borderPath" />
              <text v-for="(l, i) in labels" :key="i" class="place" :x="l.x" :y="l.y">{{ l.text }}</text>
              <g v-for="m in markers" :key="m.n">
                <circle class="bubble" :cx="m.x" :cy="m.y" :r="m.r" />
                <text class="count" :x="m.x" :y="m.y + 8">{{ m.n }}</text>
              </g>
            </svg>
            <div class="zoom">
              <button aria-label="Zoom in"><svg viewBox="0 0 16 16"><path d="M8 1v14M1 8h14" /></svg></button>
              <button aria-label="Zoom out"><svg viewBox="0 0 16 16"><path d="M1 8h14" /></svg></button>
              <button class="reset" aria-label="Reset view"><svg class="turn" viewBox="0 0 24 26"><path d="M2 15a10 9 0 1 0 11-9" /><path class="tip" d="M13 0v12L5 6z" /></svg></button>
            </div>
            <p class="credit">© <a href="#">OpenStreetMap</a> contributors.</p>
            <aside class="regions">
              <h2>Per Region</h2>
              <table>
                <tbody>
                  <tr v-for="r in regions" :key="r.name"><th scope="row">{{ r.count }}</th><td>{{ r.name }}</td></tr>
                </tbody>
              </table>
            </aside>
          </div>
        </section>

        <div class="cards">
          <section v-for="c in cards" :key="c"><h2>{{ c }}</h2></section>
        </div>
      </main>
    </div>
  </div>
</template>

<style>
html, body { margin: 0; }
</style>

<style scoped>
* { box-sizing: border-box; }
h1, h2, p, ul { margin: 0; padding: 0; font-weight: 400; }
a { color: inherit; text-decoration: none; }
button { font: inherit; color: inherit; cursor: pointer; }
.app { height: 100vh; display: flex; flex-direction: column; overflow: hidden; background: #fff; color: #22282f; font-family: Inter, "Liberation Sans", sans-serif; }
.sprite { display: none; }
.bare { border: 0; background: none; padding: 0; display: inline-flex; align-items: center; }
.ic { flex: none; fill: none; stroke: currentColor; stroke-width: 1.4; stroke-linecap: round; stroke-linejoin: round; }
.s22 { width: 22px; height: 22px; }
.s24 { width: 24px; height: 24px; }
.s28 { width: 28px; height: 28px; }
.s30 { width: 32px; height: 32px; }
.s32 { width: 34px; height: 34px; stroke-width: 3; color: #4f5d6b; }
.s36 { width: 36px; height: 36px; }
.s42 { width: 42px; height: 42px; }
.s46 { width: 46px; height: 46px; }
.s48 { width: 48px; height: 48px; }
.soft { color: #4f5d6b; }
.blue { color: #4a9df5; }

.topbar { flex: none; height: 120px; display: flex; border-bottom: 2px solid #e5e5e5; }
.brand { width: 680px; flex: none; display: flex; align-items: center; border-right: 2px solid #e5e5e5; }
.menu { width: 180px; justify-content: center; }
.logo { display: flex; align-items: center; gap: 28px; padding-left: 39px; color: #353f5e; }
.mark { width: 84px; height: 58px; }
.word { font: 400 56px/60px Roboto, sans-serif; padding-bottom: 4px; }
.word b { font-weight: 700; }
.cap { font-size: 42px; }
.org { flex: 1; min-width: 0; display: flex; align-items: center; padding: 0 80px 0 40px; }
.org-logo { flex: none; width: 72px; height: 72px; border: 4px solid #e5e5e5; border-radius: 50%; display: grid; place-items: center; }
.org-logo svg { width: 42px; height: 29px; }
.org-name { margin-left: 20px; gap: 32px; font-size: 29px; font-weight: 500; white-space: nowrap; }
.facts { list-style: none; display: flex; gap: 32px; margin-left: 66px; font-size: 24px; color: #4f5d6b; white-space: nowrap; }
.facts li { display: flex; align-items: center; gap: 12px; }
.account { margin-left: auto; display: flex; align-items: center; gap: 56px; }
.avatar { width: 64px; height: 64px; border: 0; padding: 0; border-radius: 50%; background: #f8511d; color: #fff; font-size: 32px; }

.body { flex: 1; min-height: 0; display: flex; }
.rail { flex: none; width: 180px; padding: 20px 0 34px; background: #f7f8fa; display: flex; flex-direction: column; font-size: 22px; line-height: 26px; font-weight: 500; text-align: center; }
.rail a { position: relative; display: flex; flex-direction: column; align-items: center; gap: 14px; padding: 20px 12px; }
.rail a span { margin: 0 -4px; }
.rail a.active { background: #e5e5e5; }
.rail a.active::before { content: ""; position: absolute; left: 0; top: 20px; bottom: 20px; width: 8px; border-radius: 0 8px 8px 0; background: #3e93ee; }
.theme { margin-top: auto; justify-content: center; padding: 4px 0; }

.side { flex: none; width: 500px; padding: 20px 20px 24px; border-right: 2px solid #e5e5e5; display: flex; flex-direction: column; }
.search { display: flex; align-items: center; gap: 24px; height: 70px; padding: 0 24px; border: 2px solid #e5e5e5; border-radius: 12px; }
.search input { flex: 1; min-width: 0; border: 0; outline: 0; padding: 0; background: none; font: 28px Inter, sans-serif; color: #22282f; }
.search input::placeholder { color: #4f5d6b; opacity: 1; }
.row { position: relative; display: flex; align-items: center; gap: 26px; height: 54px; margin-top: 13px; padding: 0 13px 0 14px; border-radius: 14px; font-size: 26px; font-weight: 500; }
.row span { flex: 1; }
.row.current { margin-top: 20px; background: #f7f8fa; }
.row.current::before { content: ""; position: absolute; left: -16px; top: 12px; width: 8px; height: 32px; border-radius: 4px; background: #3e93ee; }
.feedback { margin: auto 4px 0; display: flex; align-items: flex-start; gap: 22px; padding: 18px 22px 20px; border: 2px solid #e5e5e5; border-radius: 12px; background: #f7f8fa; font-size: 26px; line-height: 39px; }
.feedback > svg { margin-top: 6px; }
.feedback div { flex: 1; }
.feedback h2 { font-size: 26px; font-weight: 600; line-height: 36px; margin-bottom: 5px; }
.feedback p { color: #4f5d6b; margin-bottom: 8px; }
.feedback div a { color: #3e9bff; }
.minus { width: 22px; height: 3px; margin-top: 15px; background: #4f5d6b; }

main { flex: 1; min-width: 0; padding: 30px 40px 0; overflow: hidden; }
.tools { display: flex; justify-content: flex-end; align-items: center; gap: 10px; margin-bottom: 25px; }
.box { display: flex; align-items: center; gap: 8px; height: 60px; padding: 0 24px; border: 2px solid #e5e5e5; border-radius: 8px; background: #fff; font-size: 28px; font-weight: 500; }
.box { font-size: 29px; }
.box select { appearance: none; border: 0; padding: 0; background: none; font: inherit; color: inherit; }
.tool-icons { display: flex; align-items: center; gap: 30px; margin: 0 8px 0 12px; }

.threats { margin: 0 -4px; border: 8px solid #ff2a00; background: #f7f8fa; }
.threats h1 { font-size: 35px; line-height: 112px; padding: 0 28px 1px; }
.map { position: relative; aspect-ratio: 2256 / 997; background: #aad3df; overflow: hidden; }
.world { display: block; width: 100%; height: 100%; }
.land { fill: #f2efe9; }
.water { fill: #aad3df; }
.river { fill: none; stroke: #aad3df; stroke-width: 2; opacity: .7; }
.faint { opacity: .35; }
.border { fill: none; stroke: #b894b8; stroke-width: 2; stroke-linejoin: round; opacity: .65; }
.place { font: 19px "Noto Sans", "DejaVu Sans", "Noto Sans CJK SC", sans-serif; text-anchor: middle; fill: #7c5b80; stroke: #ffffffb3; stroke-width: 4; stroke-linejoin: round; paint-order: stroke; }
.bubble { fill: rgba(102, 75, 235, .53); stroke: #6044ec; stroke-width: 3; }
.count { font: 700 26px Inter, sans-serif; text-anchor: middle; fill: #fff; stroke: #323850; stroke-width: 6; stroke-linejoin: round; paint-order: stroke; }
.zoom { position: absolute; left: 14px; top: 16px; display: flex; flex-direction: column; }
.zoom button { width: 42px; height: 43px; padding: 0; border: 2px solid #c9cdd2; border-radius: 6px 6px 0 0; background: #fff; display: grid; place-items: center; }
.zoom button + button { border-radius: 0 0 6px 6px; border-top: 0; }
.zoom .reset { margin-top: 34px; border-top: 2px solid #c9cdd2; border-radius: 6px; }
.zoom svg { width: 16px; height: 16px; fill: none; stroke: #666; stroke-width: 4; }
.zoom .turn { width: 24px; height: 26px; }
.zoom .turn .tip { fill: #666; stroke: none; }
.credit { position: absolute; left: 0; bottom: 0; padding: 3px 10px 2px; background: rgba(255, 255, 255, .8); border-radius: 0 8px 0 0; font-size: 22px; line-height: 28px; }
.credit a { color: #666; }
.regions { position: absolute; top: 24px; right: 22px; bottom: 21px; width: 400px; padding: 27px 22px; border-radius: 20px; background: rgba(255, 255, 255, .8); color: #4b4f56; }
.regions h2 { font-size: 35px; line-height: 44px; margin-bottom: 24px; }
.regions table { border-collapse: collapse; font-size: 29px; }
.regions th { width: 120px; height: 64px; padding: 0; text-align: left; font-weight: 700; }
.regions td { padding: 0; }

.cards { display: grid; grid-template-columns: repeat(3, 1fr); gap: 40px; margin-top: 37px; }
.cards section { height: 400px; padding: 34px 30px; border: 2px solid #e5e5e5; border-radius: 12px; background: #f7f8fa; }
.cards h2 { font-size: 35px; line-height: 46px; }
</style>
